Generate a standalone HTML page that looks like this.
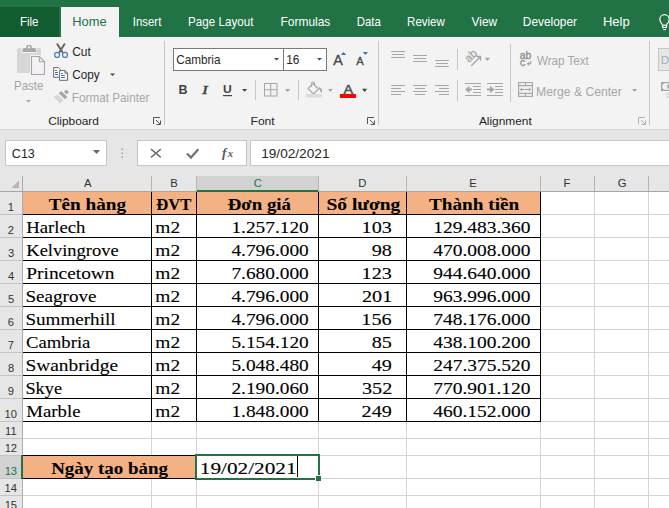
<!DOCTYPE html>
<html><head><meta charset="utf-8"><style>
*{margin:0;padding:0}html,body{width:669px;height:508px;overflow:hidden;background:#fff}
svg{display:block}
</style></head><body><svg width="669" height="508" viewBox="0 0 669 508">
<rect x="0" y="0" width="669" height="37" fill="#217346" />
<rect x="0" y="7" width="59" height="30" fill="#115d31" />
<rect x="61" y="7" width="58" height="30" fill="#f3f3f3" />
<g fill="none" stroke="#fff" stroke-width="1.2"><path d="M662.3 24.6 C660.6 22.4 659.8 21 659.8 19.4 A4.7 4.7 0 0 1 669.2 19.4 C669.2 21 668.4 22.4 666.7 24.6"/><rect x="662.6" y="25.2" width="3.9" height="2.3"/><path d="M663.2 29.6 H665.9"/></g>
<rect x="0" y="37" width="669" height="92" fill="#f3f3f3" />
<rect x="0" y="129" width="669" height="1" fill="#d5d5d5" />
<rect x="0" y="130" width="669" height="46" fill="#e6e6e6" />
<rect x="164" y="41" width="1" height="84" fill="#c6c6c6" />
<rect x="378" y="41" width="1" height="84" fill="#c6c6c6" />
<rect x="649" y="41" width="1" height="84" fill="#c6c6c6" />
<rect x="17" y="48" width="24" height="25" rx="1.5" fill="#d9d6d9"/>
<rect x="21.5" y="47" width="15" height="6" fill="#f3f3f3"/>
<path d="M22.5 52 V49.5 Q22.5 48 24 48 H26.3 V46.5 Q26.3 45 27.8 45 H30.2 Q31.7 45 31.7 46.5 V48 H34.5 Q36 48 36 49.5 V52 Z" fill="#a8a8a8"/>
<rect x="28" y="46.3" width="2" height="2" fill="#f3f3f3"/>
<path d="M30 55 H40 L46 61 V76 H30 Z" fill="#f3f3f3"/>
<path d="M31.5 56.5 H39.3 L44.5 61.7 V74.5 H31.5 Z" fill="#f5f0f5" stroke="#a6a6a6" stroke-width="1.1"/>
<path d="M39.3 56.5 V61.7 H44.5" fill="none" stroke="#a6a6a6" stroke-width="1.1"/>
<path d="M26 100 H31 L28.5 102.5 Z" fill="#a6a6a6"/>
<g fill="none" stroke="#666" stroke-width="2" stroke-linecap="round"><path d="M57.4 44.2 L62.3 52"/><path d="M64.4 44.2 L59.5 52"/></g>
<g fill="none" stroke="#4a7ebb" stroke-width="1.25"><circle cx="57.1" cy="54.9" r="2.5"/><circle cx="65" cy="54.9" r="2.5"/></g>
<path d="M53.7 67.6 H58.5 L60.5 69.6 V77.3 H53.7 Z" fill="#fff" stroke="#666" stroke-width="1"/>
<path d="M59.6 70.6 H65 L67.6 73.2 V80.3 H59.6 Z" fill="#fff" stroke="#666" stroke-width="1"/>
<path d="M65 70.6 V73.2 H67.6" fill="none" stroke="#666" stroke-width="1"/>
<g fill="#3f73b5"><rect x="55" y="70" width="2" height="1"/><rect x="55" y="72" width="3" height="1"/><rect x="55" y="74" width="3" height="1"/><rect x="61" y="73" width="2" height="1"/><rect x="61" y="75" width="4" height="1"/><rect x="61" y="77" width="4" height="1"/></g>
<path d="M110 73.5 H115 L112.5 76 Z" fill="#444"/>
<g transform="translate(63,95.2) rotate(-45)"><rect x="-1.6" y="-4.3" width="3.4" height="8.6" fill="#a6a6a6"/><rect x="3.1" y="-1.7" width="3.3" height="3.6" rx="0.6" fill="#a6a6a6"/><path d="M-7.8 -5.6 L-3.3 -4.3 V3.8 L-8.1 3.8 Z" fill="#d9d6d9"/></g>
<g fill="none" stroke="#555" stroke-width="1"><path d="M153.5 124 V117.5 H160"/><path d="M156 120 L160 124"/><path d="M156.5 124.5 H160.5 V120.5"/></g>
<g fill="none" stroke="#555" stroke-width="1"><path d="M367.5 124 V117.5 H374"/><path d="M370 120 L374 124"/><path d="M370.5 124.5 H374.5 V120.5"/></g>
<g fill="none" stroke="#b0b0b0" stroke-width="1"><path d="M638.5 124 V117.5 H645"/><path d="M641 120 L645 124"/><path d="M641.5 124.5 H645.5 V120.5"/></g>
<rect x="173.5" y="48.5" width="110" height="22" fill="#fff" stroke="#7a7a7a"/>
<rect x="283.5" y="48.5" width="43" height="22" fill="#fff" stroke="#7a7a7a"/>
<path d="M274 58 H279 L276.5 60.5 Z" fill="#444"/><path d="M317 58 H322 L319.5 60.5 Z" fill="#444"/>
<path d="M340.8 55 L343.5 51.9 L346.3 55 Z" fill="#3c76b8"/><path d="M362.8 51.9 L368.1 51.9 L365.45 55 Z" fill="#3c76b8"/>
<text transform="translate(202.2,93.9) scale(1.2,1)" font-family="Liberation Serif" font-style="italic" font-size="13.4" fill="#444" stroke="#444" stroke-width="0.6">I</text>
<rect x="223" y="95" width="9" height="1.2" fill="#444"/>
<path d="M242 89 H247.2 L244.6 91.8 Z" fill="#444"/>
<rect x="255" y="80" width="1" height="20" fill="#c6c6c6" />
<rect x="264.5" y="83.5" width="12.5" height="12.5" fill="#f5f0f5" stroke="#a6a6a6"/><path d="M270.75 83.5 V96 M264.5 89.75 H277" stroke="#a6a6a6" fill="none"/>
<path d="M285 89 H290.3 L287.65 92 Z" fill="#a6a6a6"/>
<rect x="298" y="80" width="1" height="20" fill="#c6c6c6" />
<path d="M313 83.5 L318.5 89 L313.5 94 L308 88.5 Z" fill="#f5f0f5" stroke="#a6a6a6" stroke-width="1.1"/>
<path d="M311.5 87 V83 Q311.5 82 312.5 82 H313.5 Q314.5 82 314.5 83 V86" fill="none" stroke="#a6a6a6" stroke-width="1"/>
<path d="M318.5 87 Q321.5 87.5 322 90 V93 Q320.5 92 319.5 89.5 Z" fill="#a6a6a6"/>
<rect x="306" y="94" width="16" height="3.5" fill="#dcdcdc" />
<path d="M328 89 H332.8 L330.4 92 Z" fill="#a6a6a6"/>
<rect x="340" y="94" width="16" height="4" fill="#ff0000" />
<path d="M362 88.8 H367.3 L364.65 92 Z" fill="#444"/>
<rect x="391" y="51" width="14" height="1" fill="#a6a6a6" />
<rect x="392" y="54" width="12" height="1" fill="#a6a6a6" />
<rect x="391" y="57" width="14" height="1" fill="#a6a6a6" />
<rect x="413" y="55" width="14" height="1" fill="#a6a6a6" />
<rect x="414" y="58" width="12" height="1" fill="#a6a6a6" />
<rect x="413" y="61" width="14" height="1" fill="#a6a6a6" />
<rect x="435" y="60" width="14" height="1" fill="#a6a6a6" />
<rect x="436" y="63" width="12" height="1" fill="#a6a6a6" />
<rect x="435" y="66" width="14" height="1" fill="#a6a6a6" />
<rect x="391" y="85" width="14" height="1" fill="#a6a6a6" />
<rect x="391" y="88" width="10" height="1" fill="#a6a6a6" />
<rect x="391" y="91" width="14" height="1" fill="#a6a6a6" />
<rect x="391" y="94" width="10" height="1" fill="#a6a6a6" />
<rect x="413" y="85" width="14" height="1" fill="#a6a6a6" />
<rect x="415" y="88" width="10" height="1" fill="#a6a6a6" />
<rect x="413" y="91" width="14" height="1" fill="#a6a6a6" />
<rect x="415" y="94" width="10" height="1" fill="#a6a6a6" />
<rect x="435" y="85" width="14" height="1" fill="#a6a6a6" />
<rect x="439" y="88" width="10" height="1" fill="#a6a6a6" />
<rect x="435" y="91" width="14" height="1" fill="#a6a6a6" />
<rect x="439" y="94" width="10" height="1" fill="#a6a6a6" />
<rect x="457" y="49" width="1" height="21" fill="#c6c6c6" />
<rect x="457" y="80" width="1" height="21" fill="#c6c6c6" />
<text transform="translate(469,63) rotate(-45)" font-family="Liberation Sans" font-size="11.5" fill="#a6a6a6" stroke="#a6a6a6" stroke-width="0.3">ab</text>
<path d="M471.3 65.7 L480.3 56.7 M476.3 56.5 H480.5 V60.7" stroke="#a6a6a6" stroke-width="1.3" fill="none"/>
<path d="M484.7 57.7 H490.1 L487.4 61 Z" fill="#a6a6a6"/>
<rect x="465" y="83" width="16" height="1" fill="#a6a6a6" />
<rect x="465" y="95" width="16" height="1" fill="#a6a6a6" />
<rect x="473" y="86" width="8" height="1" fill="#a6a6a6" />
<rect x="473" y="89" width="8" height="1" fill="#a6a6a6" />
<rect x="473" y="92" width="8" height="1" fill="#a6a6a6" />
<rect x="487" y="83" width="16" height="1" fill="#a6a6a6" />
<rect x="487" y="95" width="16" height="1" fill="#a6a6a6" />
<rect x="495" y="86" width="8" height="1" fill="#a6a6a6" />
<rect x="495" y="89" width="8" height="1" fill="#a6a6a6" />
<rect x="495" y="92" width="8" height="1" fill="#a6a6a6" />
<path d="M465 89.5 L469.5 85.8 V88.4 H472 V90.6 H469.5 V93.2 Z" fill="#a6a6a6"/>
<path d="M494.5 89.5 L490 85.8 V88.4 H487 V90.6 H490 V93.2 Z" fill="#a6a6a6"/>
<rect x="510" y="44" width="1" height="58" fill="#c6c6c6" />
<text x="519.8" y="58.6" font-family="Liberation Sans" font-size="10.2" fill="#8f8f8f" stroke="#8f8f8f" stroke-width="0.35" textLength="11.5" lengthAdjust="spacingAndGlyphs">ab</text>
<text x="519.9" y="65.8" font-family="Liberation Sans" font-size="10.5" fill="#8f8f8f" stroke="#8f8f8f" stroke-width="0.35">c</text>
<path d="M530.7 61 V63.8 H527.5 M529 62.3 L527.4 63.8 L529 65.3" fill="none" stroke="#8f8f8f" stroke-width="1"/>
<g fill="none" stroke="#a6a6a6" stroke-width="1.1"><rect x="518.6" y="82.6" width="13.8" height="13.8" fill="#f5f0f5"/><path d="M518.6 85.6 H532.4 M518.6 93.4 H532.4 M525.5 82.6 V85.6 M525.5 93.4 V96.4"/><path d="M520.5 89.5 H530.5"/></g>
<path d="M520 89.5 L522 87.5 V91.5 Z M531 89.5 L529 87.5 V91.5 Z" fill="#a6a6a6"/>
<path d="M632 89 H637 L634.5 92 Z" fill="#a6a6a6"/>
<rect x="658.5" y="48.5" width="20" height="22" fill="#e6e6e6" stroke="#c6c6c6"/>
<rect x="661" y="82" width="10" height="9" fill="#a6a6a6"/><path d="M664 83.3 H671 V89.7 H664 L662.3 88 V85 Z" fill="#f5f0f5"/><circle cx="669.3" cy="86.5" r="2.2" fill="#a6a6a6"/><rect x="665.5" y="93.5" width="4" height="1" fill="#c0c0c0"/><rect x="666.5" y="96.5" width="3" height="1" fill="#c0c0c0"/>
<rect x="5.5" y="140.5" width="101" height="25" fill="#fff" stroke="#c6c6c6" stroke-width="1"/>
<rect x="137.5" y="140.5" width="109" height="25" fill="#fff" stroke="#c6c6c6" stroke-width="1"/>
<rect x="250.5" y="140.5" width="430" height="25" fill="#fff" stroke="#c6c6c6" stroke-width="1"/>
<path d="M151 149.2 L160.8 157.4 M160.8 149.2 L151 157.4" stroke="#707070" stroke-width="1.5" fill="none"/>
<path d="M187 153.5 L191 157.5 L198.3 149.2" stroke="#747474" stroke-width="2.3" fill="none"/>
<text x="222" y="156.5" font-family="Liberation Serif" font-style="italic" font-weight="bold" font-size="13.5" fill="#595959">f</text><text x="227.8" y="156.5" font-family="Liberation Serif" font-style="italic" font-weight="bold" font-size="10.5" fill="#595959">x</text>
<path d="M93 150 H100 L96.5 154 Z" fill="#666"/>
<g fill="#a0a0a0"><rect x="121.5" y="148.5" width="1.5" height="1.5"/><rect x="121.5" y="152.5" width="1.5" height="1.5"/><rect x="121.5" y="156.5" width="1.5" height="1.5"/></g>
<rect x="0" y="176" width="669" height="16" fill="#e6e6e6" />
<rect x="0" y="192" width="22" height="316" fill="#e6e6e6" />
<rect x="197" y="176" width="121" height="15" fill="#d2d2d2" />
<rect x="0" y="456" width="21" height="22" fill="#d2d2d2" />
<rect x="23" y="192" width="646" height="316" fill="#fff" />
<g shape-rendering="crispEdges">
<rect x="151" y="192" width="1" height="316" fill="#d4d4d4" />
<rect x="196" y="192" width="1" height="316" fill="#d4d4d4" />
<rect x="318" y="192" width="1" height="316" fill="#d4d4d4" />
<rect x="406" y="192" width="1" height="316" fill="#d4d4d4" />
<rect x="540" y="192" width="1" height="316" fill="#d4d4d4" />
<rect x="594" y="192" width="1" height="316" fill="#d4d4d4" />
<rect x="648" y="192" width="1" height="316" fill="#d4d4d4" />
<rect x="702" y="192" width="1" height="316" fill="#d4d4d4" />
<rect x="23" y="214" width="646" height="1" fill="#d4d4d4" />
<rect x="23" y="237" width="646" height="1" fill="#d4d4d4" />
<rect x="23" y="260" width="646" height="1" fill="#d4d4d4" />
<rect x="23" y="283" width="646" height="1" fill="#d4d4d4" />
<rect x="23" y="306" width="646" height="1" fill="#d4d4d4" />
<rect x="23" y="329" width="646" height="1" fill="#d4d4d4" />
<rect x="23" y="352" width="646" height="1" fill="#d4d4d4" />
<rect x="23" y="375" width="646" height="1" fill="#d4d4d4" />
<rect x="23" y="398" width="646" height="1" fill="#d4d4d4" />
<rect x="23" y="421" width="646" height="1" fill="#d4d4d4" />
<rect x="23" y="438" width="646" height="1" fill="#d4d4d4" />
<rect x="23" y="455" width="646" height="1" fill="#d4d4d4" />
<rect x="23" y="478" width="646" height="1" fill="#d4d4d4" />
<rect x="23" y="495" width="646" height="1" fill="#d4d4d4" />
<rect x="23" y="512" width="646" height="1" fill="#d4d4d4" />
<rect x="23" y="192" width="517" height="22" fill="#f4b183" />
<rect x="23" y="456" width="173" height="22" fill="#f4b183" />
<rect x="22" y="191" width="1" height="231" fill="#000" />
<rect x="151" y="191" width="1" height="231" fill="#000" />
<rect x="196" y="191" width="1" height="231" fill="#000" />
<rect x="318" y="191" width="1" height="231" fill="#000" />
<rect x="406" y="191" width="1" height="231" fill="#000" />
<rect x="540" y="191" width="1" height="231" fill="#000" />
<rect x="22" y="191" width="519" height="1" fill="#000" />
<rect x="22" y="214" width="519" height="1" fill="#000" />
<rect x="22" y="237" width="519" height="1" fill="#000" />
<rect x="22" y="260" width="519" height="1" fill="#000" />
<rect x="22" y="283" width="519" height="1" fill="#000" />
<rect x="22" y="306" width="519" height="1" fill="#000" />
<rect x="22" y="329" width="519" height="1" fill="#000" />
<rect x="22" y="352" width="519" height="1" fill="#000" />
<rect x="22" y="375" width="519" height="1" fill="#000" />
<rect x="22" y="398" width="519" height="1" fill="#000" />
<rect x="22" y="421" width="519" height="1" fill="#000" />
<rect x="22" y="455" width="174" height="1" fill="#000" />
<rect x="22" y="478" width="174" height="1" fill="#000" />
<rect x="22" y="455" width="1" height="24" fill="#000" />
<rect x="151" y="176" width="1" height="15" fill="#b4b4b4" />
<rect x="196" y="176" width="1" height="15" fill="#b4b4b4" />
<rect x="318" y="176" width="1" height="15" fill="#b4b4b4" />
<rect x="406" y="176" width="1" height="15" fill="#b4b4b4" />
<rect x="540" y="176" width="1" height="15" fill="#b4b4b4" />
<rect x="594" y="176" width="1" height="15" fill="#b4b4b4" />
<rect x="648" y="176" width="1" height="15" fill="#b4b4b4" />
<rect x="702" y="176" width="1" height="15" fill="#b4b4b4" />
<rect x="22" y="176" width="1" height="332" fill="#acacac" />
<rect x="0" y="191" width="669" height="1" fill="#a2a6aa" />
<rect x="0" y="214" width="22" height="1" fill="#c4c4c4" />
<rect x="0" y="237" width="22" height="1" fill="#c4c4c4" />
<rect x="0" y="260" width="22" height="1" fill="#c4c4c4" />
<rect x="0" y="283" width="22" height="1" fill="#c4c4c4" />
<rect x="0" y="306" width="22" height="1" fill="#c4c4c4" />
<rect x="0" y="329" width="22" height="1" fill="#c4c4c4" />
<rect x="0" y="352" width="22" height="1" fill="#c4c4c4" />
<rect x="0" y="375" width="22" height="1" fill="#c4c4c4" />
<rect x="0" y="398" width="22" height="1" fill="#c4c4c4" />
<rect x="0" y="421" width="22" height="1" fill="#c4c4c4" />
<rect x="0" y="438" width="22" height="1" fill="#c4c4c4" />
<rect x="0" y="455" width="22" height="1" fill="#c4c4c4" />
<rect x="0" y="478" width="22" height="1" fill="#c4c4c4" />
<rect x="0" y="495" width="22" height="1" fill="#c4c4c4" />
<rect x="0" y="512" width="22" height="1" fill="#c4c4c4" />
<rect x="195" y="454" width="125" height="2" fill="#217346" />
<rect x="195" y="478" width="120" height="2" fill="#217346" />
<rect x="195" y="454" width="2" height="26" fill="#217346" />
<rect x="318" y="454" width="2" height="21" fill="#217346" />
<rect x="315" y="475" width="6" height="6" fill="#fff" />
<rect x="316" y="476" width="5" height="5" fill="#217346" />
<rect x="197" y="190" width="121" height="2" fill="#217346" />
<rect x="21" y="455" width="2" height="24" fill="#217346" />
</g>
<path d="M11.5 188 L19 180.5 V188 Z" fill="#b4b4b4"/>
<rect x="297" y="456" width="1" height="21" fill="#000" />
<text transform="translate(19.89,26) scale(0.9220,1)" font-family="Liberation Sans" font-size="12.57" fill="#fff">File</text>
<text transform="translate(72.19,26) scale(1.0269,1)" font-family="Liberation Sans" font-size="12.57" fill="#217346">Home</text>
<text transform="translate(132.70,26) scale(0.9115,1)" font-family="Liberation Sans" font-size="12.57" fill="#fff">Insert</text>
<text transform="translate(188.09,26) scale(0.9261,1)" font-family="Liberation Sans" font-size="12.57" fill="#fff">Page Layout</text>
<text transform="translate(280.57,26) scale(0.9508,1)" font-family="Liberation Sans" font-size="12.57" fill="#fff">Formulas</text>
<text transform="translate(356.70,26) scale(0.9123,1)" font-family="Liberation Sans" font-size="12.57" fill="#fff">Data</text>
<text transform="translate(407.10,26) scale(0.9162,1)" font-family="Liberation Sans" font-size="12.57" fill="#fff">Review</text>
<text transform="translate(471.60,26) scale(0.9459,1)" font-family="Liberation Sans" font-size="12.57" fill="#fff">View</text>
<text transform="translate(522.87,26) scale(0.9458,1)" font-family="Liberation Sans" font-size="12.57" fill="#fff">Developer</text>
<text transform="translate(602.88,26) scale(1.0386,1)" font-family="Liberation Sans" font-size="12.57" fill="#fff">Help</text>
<text transform="translate(48.14,124.8) scale(1.0627,1)" font-family="Liberation Sans" font-size="11.17" fill="#262626">Clipboard</text>
<text transform="translate(250.56,124.8) scale(1.0779,1)" font-family="Liberation Sans" font-size="11.17" fill="#262626">Font</text>
<text transform="translate(478.90,124.8) scale(1.0659,1)" font-family="Liberation Sans" font-size="11.17" fill="#262626">Alignment</text>
<text transform="translate(14.10,90) scale(0.9135,1)" font-family="Liberation Sans" font-size="12.57" fill="#a6a6a6">Paste</text>
<text transform="translate(72.14,56) scale(0.9519,1)" font-family="Liberation Sans" font-size="12.57" fill="#262626">Cut</text>
<text transform="translate(72.15,79.2) scale(0.9390,1)" font-family="Liberation Sans" font-size="12.57" fill="#262626">Copy</text>
<text transform="translate(71.78,102) scale(0.9356,1)" font-family="Liberation Sans" font-size="12.57" fill="#a6a6a6">Format Painter</text>
<text transform="translate(176.15,64) scale(0.9342,1)" font-family="Liberation Sans" font-size="12.57" fill="#262626">Cambria</text>
<text transform="translate(286.26,64) scale(0.9459,1)" font-family="Liberation Sans" font-size="12.57" fill="#262626">16</text>
<text transform="translate(333.20,65) scale(1.0230,1)" font-family="Liberation Sans" font-size="13.97" fill="#444" stroke="#444" stroke-width="0.3">A</text>
<text transform="translate(356.30,65) scale(0.9630,1)" font-family="Liberation Sans" font-size="11.59" fill="#444" stroke="#444" stroke-width="0.3">A</text>
<text transform="translate(178.62,94) scale(1.0271,1)" font-family="Liberation Sans" font-size="12.15" font-weight="bold" fill="#444">B</text>
<text transform="translate(223.03,93) scale(1.1162,1)" font-family="Liberation Sans" font-size="10.89" font-weight="bold" fill="#444">U</text>
<text transform="translate(343.60,93.8) scale(1.0548,1)" font-family="Liberation Sans" font-size="13.69" fill="#505050" stroke="#505050" stroke-width="0.5">A</text>
<text transform="translate(537.00,64.5) scale(0.9221,1)" font-family="Liberation Sans" font-size="12.57" fill="#a6a6a6">Wrap Text</text>
<text transform="translate(536.05,96) scale(0.9694,1)" font-family="Liberation Sans" font-size="12.57" fill="#a6a6a6">Merge &amp; Center</text>
<text transform="translate(660.69,63.6) scale(1.0000,1)" font-family="Liberation Sans" font-size="11.59" fill="#a9a9c4">D</text>
<text transform="translate(11.81,158) scale(1.0000,1)" font-family="Liberation Sans" font-size="12.57" fill="#262626">C13</text>
<text transform="translate(261.15,158) scale(1.0411,1)" font-family="Liberation Sans" font-size="13.13" fill="#262626">19/02/2021</text>
<text transform="translate(83.95,187) scale(1.0000,1)" font-family="Liberation Sans" font-size="11.31" fill="#333">A</text>
<text transform="translate(170.27,187) scale(1.0000,1)" font-family="Liberation Sans" font-size="11.31" fill="#333">B</text>
<text transform="translate(253.75,187) scale(1.0000,1)" font-family="Liberation Sans" font-size="11.31" fill="#217346">C</text>
<text transform="translate(358.17,187) scale(1.0000,1)" font-family="Liberation Sans" font-size="11.31" fill="#333">D</text>
<text transform="translate(469.32,187) scale(1.0000,1)" font-family="Liberation Sans" font-size="11.31" fill="#333">E</text>
<text transform="translate(563.49,187) scale(1.0000,1)" font-family="Liberation Sans" font-size="11.31" fill="#333">F</text>
<text transform="translate(617.76,187) scale(1.0000,1)" font-family="Liberation Sans" font-size="11.31" fill="#333">G</text>
<text transform="translate(7.77,211) scale(1.0000,1)" font-family="Liberation Sans" font-size="11.17" fill="#333">1</text>
<text transform="translate(7.86,234) scale(1.0000,1)" font-family="Liberation Sans" font-size="11.17" fill="#333">2</text>
<text transform="translate(7.94,257) scale(1.0000,1)" font-family="Liberation Sans" font-size="11.17" fill="#333">3</text>
<text transform="translate(7.94,280) scale(1.0000,1)" font-family="Liberation Sans" font-size="11.17" fill="#333">4</text>
<text transform="translate(7.94,303) scale(1.0000,1)" font-family="Liberation Sans" font-size="11.17" fill="#333">5</text>
<text transform="translate(7.86,326) scale(1.0000,1)" font-family="Liberation Sans" font-size="11.17" fill="#333">6</text>
<text transform="translate(7.86,349) scale(1.0000,1)" font-family="Liberation Sans" font-size="11.17" fill="#333">7</text>
<text transform="translate(7.94,372) scale(1.0000,1)" font-family="Liberation Sans" font-size="11.17" fill="#333">8</text>
<text transform="translate(7.86,395) scale(1.0000,1)" font-family="Liberation Sans" font-size="11.17" fill="#333">9</text>
<text transform="translate(4.58,418) scale(1.0000,1)" font-family="Liberation Sans" font-size="11.17" fill="#333">10</text>
<text transform="translate(5.08,435) scale(1.0000,1)" font-family="Liberation Sans" font-size="11.17" fill="#333">11</text>
<text transform="translate(4.66,452) scale(1.0000,1)" font-family="Liberation Sans" font-size="11.17" fill="#333">12</text>
<text transform="translate(4.66,475) scale(1.0000,1)" font-family="Liberation Sans" font-size="11.17" fill="#217346">13</text>
<text transform="translate(4.58,492) scale(1.0000,1)" font-family="Liberation Sans" font-size="11.17" fill="#333">14</text>
<text transform="translate(4.66,509) scale(1.0000,1)" font-family="Liberation Sans" font-size="11.17" fill="#333">15</text>
<text transform="translate(48.70,209.5) scale(1.1135,1)" font-family="Liberation Serif" font-size="17.25" font-weight="bold" fill="#000" stroke="#000" stroke-width="0.08">Tên hàng</text>
<text transform="translate(156.34,209.5) scale(0.9619,1)" font-family="Liberation Serif" font-size="17.25" font-weight="bold" fill="#000" stroke="#000" stroke-width="0.08">ĐVT</text>
<text transform="translate(227.71,209.5) scale(1.0920,1)" font-family="Liberation Serif" font-size="17.25" font-weight="bold" fill="#000" stroke="#000" stroke-width="0.08">Đơn giá</text>
<text transform="translate(326.49,209.5) scale(1.1293,1)" font-family="Liberation Serif" font-size="17.25" font-weight="bold" fill="#000" stroke="#000" stroke-width="0.08">Số lượng</text>
<text transform="translate(429.00,209.5) scale(1.1143,1)" font-family="Liberation Serif" font-size="17.25" font-weight="bold" fill="#000" stroke="#000" stroke-width="0.08">Thành tiền</text>
<text transform="translate(26.31,232.8) scale(1.0562,1)" font-family="Liberation Serif" font-size="17.71" fill="#000" stroke="#000" stroke-width="0.12">Harlech</text>
<text transform="translate(155.30,232.8) scale(1.0965,1)" font-family="Liberation Serif" font-size="17.71" fill="#000" stroke="#000" stroke-width="0.12">m2</text>
<text transform="translate(231.39,232.8) scale(1.0928,1)" font-family="Liberation Serif" font-size="17.71" fill="#000" stroke="#000" stroke-width="0.12">1.257.120</text>
<text transform="translate(361.62,232.8) scale(1.1410,1)" font-family="Liberation Serif" font-size="17.71" fill="#000" stroke="#000" stroke-width="0.12">103</text>
<text transform="translate(433.18,232.8) scale(1.1003,1)" font-family="Liberation Serif" font-size="17.71" fill="#000" stroke="#000" stroke-width="0.12">129.483.360</text>
<text transform="translate(26.31,255.8) scale(1.0437,1)" font-family="Liberation Serif" font-size="17.71" fill="#000" stroke="#000" stroke-width="0.12">Kelvingrove</text>
<text transform="translate(155.30,255.8) scale(1.0965,1)" font-family="Liberation Serif" font-size="17.71" fill="#000" stroke="#000" stroke-width="0.12">m2</text>
<text transform="translate(231.39,255.8) scale(1.0928,1)" font-family="Liberation Serif" font-size="17.71" fill="#000" stroke="#000" stroke-width="0.12">4.796.000</text>
<text transform="translate(371.72,255.8) scale(1.1410,1)" font-family="Liberation Serif" font-size="17.71" fill="#000" stroke="#000" stroke-width="0.12">98</text>
<text transform="translate(433.18,255.8) scale(1.1003,1)" font-family="Liberation Serif" font-size="17.71" fill="#000" stroke="#000" stroke-width="0.12">470.008.000</text>
<text transform="translate(26.30,278.8) scale(1.0947,1)" font-family="Liberation Serif" font-size="17.71" fill="#000" stroke="#000" stroke-width="0.12">Princetown</text>
<text transform="translate(155.30,278.8) scale(1.0965,1)" font-family="Liberation Serif" font-size="17.71" fill="#000" stroke="#000" stroke-width="0.12">m2</text>
<text transform="translate(231.39,278.8) scale(1.0928,1)" font-family="Liberation Serif" font-size="17.71" fill="#000" stroke="#000" stroke-width="0.12">7.680.000</text>
<text transform="translate(361.62,278.8) scale(1.1410,1)" font-family="Liberation Serif" font-size="17.71" fill="#000" stroke="#000" stroke-width="0.12">123</text>
<text transform="translate(433.18,278.8) scale(1.1003,1)" font-family="Liberation Serif" font-size="17.71" fill="#000" stroke="#000" stroke-width="0.12">944.640.000</text>
<text transform="translate(25.40,301.8) scale(1.0808,1)" font-family="Liberation Serif" font-size="17.71" fill="#000" stroke="#000" stroke-width="0.12">Seagrove</text>
<text transform="translate(155.30,301.8) scale(1.0965,1)" font-family="Liberation Serif" font-size="17.71" fill="#000" stroke="#000" stroke-width="0.12">m2</text>
<text transform="translate(231.39,301.8) scale(1.0928,1)" font-family="Liberation Serif" font-size="17.71" fill="#000" stroke="#000" stroke-width="0.12">4.796.000</text>
<text transform="translate(361.94,301.8) scale(1.1410,1)" font-family="Liberation Serif" font-size="17.71" fill="#000" stroke="#000" stroke-width="0.12">201</text>
<text transform="translate(433.18,301.8) scale(1.1003,1)" font-family="Liberation Serif" font-size="17.71" fill="#000" stroke="#000" stroke-width="0.12">963.996.000</text>
<text transform="translate(25.41,324.8) scale(1.0789,1)" font-family="Liberation Serif" font-size="17.71" fill="#000" stroke="#000" stroke-width="0.12">Summerhill</text>
<text transform="translate(155.30,324.8) scale(1.0965,1)" font-family="Liberation Serif" font-size="17.71" fill="#000" stroke="#000" stroke-width="0.12">m2</text>
<text transform="translate(231.39,324.8) scale(1.0928,1)" font-family="Liberation Serif" font-size="17.71" fill="#000" stroke="#000" stroke-width="0.12">4.796.000</text>
<text transform="translate(361.31,324.8) scale(1.1410,1)" font-family="Liberation Serif" font-size="17.71" fill="#000" stroke="#000" stroke-width="0.12">156</text>
<text transform="translate(433.18,324.8) scale(1.1003,1)" font-family="Liberation Serif" font-size="17.71" fill="#000" stroke="#000" stroke-width="0.12">748.176.000</text>
<text transform="translate(26.02,347.8) scale(1.0561,1)" font-family="Liberation Serif" font-size="17.71" fill="#000" stroke="#000" stroke-width="0.12">Cambria</text>
<text transform="translate(155.30,347.8) scale(1.0965,1)" font-family="Liberation Serif" font-size="17.71" fill="#000" stroke="#000" stroke-width="0.12">m2</text>
<text transform="translate(231.39,347.8) scale(1.0928,1)" font-family="Liberation Serif" font-size="17.71" fill="#000" stroke="#000" stroke-width="0.12">5.154.120</text>
<text transform="translate(371.72,347.8) scale(1.1410,1)" font-family="Liberation Serif" font-size="17.71" fill="#000" stroke="#000" stroke-width="0.12">85</text>
<text transform="translate(433.18,347.8) scale(1.1003,1)" font-family="Liberation Serif" font-size="17.71" fill="#000" stroke="#000" stroke-width="0.12">438.100.200</text>
<text transform="translate(25.39,370.8) scale(1.0974,1)" font-family="Liberation Serif" font-size="17.71" fill="#000" stroke="#000" stroke-width="0.12">Swanbridge</text>
<text transform="translate(155.30,370.8) scale(1.0965,1)" font-family="Liberation Serif" font-size="17.71" fill="#000" stroke="#000" stroke-width="0.12">m2</text>
<text transform="translate(231.39,370.8) scale(1.0928,1)" font-family="Liberation Serif" font-size="17.71" fill="#000" stroke="#000" stroke-width="0.12">5.048.480</text>
<text transform="translate(371.72,370.8) scale(1.1410,1)" font-family="Liberation Serif" font-size="17.71" fill="#000" stroke="#000" stroke-width="0.12">49</text>
<text transform="translate(433.18,370.8) scale(1.1003,1)" font-family="Liberation Serif" font-size="17.71" fill="#000" stroke="#000" stroke-width="0.12">247.375.520</text>
<text transform="translate(25.46,393.8) scale(1.0317,1)" font-family="Liberation Serif" font-size="17.71" fill="#000" stroke="#000" stroke-width="0.12">Skye</text>
<text transform="translate(155.30,393.8) scale(1.0965,1)" font-family="Liberation Serif" font-size="17.71" fill="#000" stroke="#000" stroke-width="0.12">m2</text>
<text transform="translate(231.39,393.8) scale(1.0928,1)" font-family="Liberation Serif" font-size="17.71" fill="#000" stroke="#000" stroke-width="0.12">2.190.060</text>
<text transform="translate(361.94,393.8) scale(1.1410,1)" font-family="Liberation Serif" font-size="17.71" fill="#000" stroke="#000" stroke-width="0.12">352</text>
<text transform="translate(433.18,393.8) scale(1.1003,1)" font-family="Liberation Serif" font-size="17.71" fill="#000" stroke="#000" stroke-width="0.12">770.901.120</text>
<text transform="translate(26.31,416.8) scale(1.0599,1)" font-family="Liberation Serif" font-size="17.71" fill="#000" stroke="#000" stroke-width="0.12">Marble</text>
<text transform="translate(155.30,416.8) scale(1.0965,1)" font-family="Liberation Serif" font-size="17.71" fill="#000" stroke="#000" stroke-width="0.12">m2</text>
<text transform="translate(231.39,416.8) scale(1.0928,1)" font-family="Liberation Serif" font-size="17.71" fill="#000" stroke="#000" stroke-width="0.12">1.848.000</text>
<text transform="translate(361.62,416.8) scale(1.1410,1)" font-family="Liberation Serif" font-size="17.71" fill="#000" stroke="#000" stroke-width="0.12">249</text>
<text transform="translate(433.18,416.8) scale(1.1003,1)" font-family="Liberation Serif" font-size="17.71" fill="#000" stroke="#000" stroke-width="0.12">460.152.000</text>
<text transform="translate(51.20,474) scale(1.0693,1)" font-family="Liberation Serif" font-size="17.71" font-weight="bold" fill="#000" stroke="#000" stroke-width="0.08">Ngày tạo bảng</text>
<text transform="translate(199.84,474.2) scale(1.2005,1)" font-family="Liberation Serif" font-size="17.71" fill="#000" stroke="#000" stroke-width="0.12">19/02/2021</text>
</svg></body></html>
